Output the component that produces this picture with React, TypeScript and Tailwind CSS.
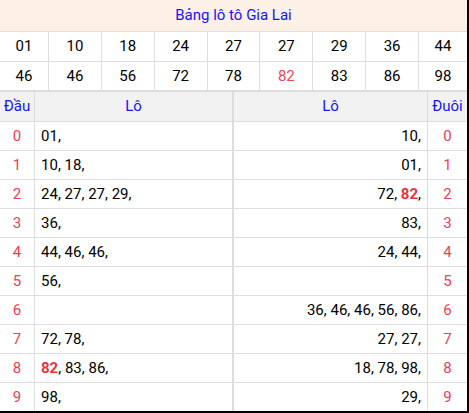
import React from "react";

const top1 = ["01", "10", "18", "24", "27", "27", "29", "36", "44"];
const top2 = ["46", "46", "56", "72", "78", "82", "83", "86", "98"];

type Item = { v: string; hot?: boolean };
const dau: Item[][] = [
  [{ v: "01" }],
  [{ v: "10" }, { v: "18" }],
  [{ v: "24" }, { v: "27" }, { v: "27" }, { v: "29" }],
  [{ v: "36" }],
  [{ v: "44" }, { v: "46" }, { v: "46" }],
  [{ v: "56" }],
  [],
  [{ v: "72" }, { v: "78" }],
  [{ v: "82", hot: true }, { v: "83" }, { v: "86" }],
  [{ v: "98" }],
];
const duoi: Item[][] = [
  [{ v: "10" }],
  [{ v: "01" }],
  [{ v: "72" }, { v: "82", hot: true }],
  [{ v: "83" }],
  [{ v: "24" }, { v: "44" }],
  [],
  [{ v: "36" }, { v: "46" }, { v: "46" }, { v: "56" }, { v: "86" }],
  [{ v: "27" }, { v: "27" }],
  [{ v: "18" }, { v: "78" }, { v: "98" }],
  [{ v: "29" }],
];

function List({ items }: { items: Item[] }) {
  return (
    <>
      {items.map((it, i) => (
        <React.Fragment key={i}>
          {i > 0 ? " " : ""}
          {it.hot ? <b className="font-bold text-[#e8323f]">{it.v}</b> : it.v}
          ,
        </React.Fragment>
      ))}
    </>
  );
}

function NumRow({ nums, last }: { nums: string[]; last?: boolean }) {
  return (
    <div
      className={`grid grid-cols-[49px_repeat(7,1fr)_48px] h-[30px] border-[#dddddd] ${
        last ? "border-b-2" : "border-b"
      }`}
    >
      {nums.map((n, i) => (
        <div
          key={i}
          className={`flex items-center justify-center border-[#dddddd] ${
            i < nums.length - 1 ? "border-r" : ""
          } ${n === "82" ? "text-[#ee4454]" : "text-black"}`}
        >
          {n}
        </div>
      ))}
    </div>
  );
}

export default function App() {
  return (
    <div className="w-[469px] h-[413px] bg-black">
      <div
        className="w-[467px] h-[411px] bg-white overflow-hidden text-[15px] leading-none"
        style={{ fontFamily: "Roboto, 'Noto Sans', sans-serif" }}
      >
        <div className="h-[32px] bg-[#fdf0e6] border-b border-[#dddddd] flex items-center justify-center text-[#1414ff]">
          Bảng lô tô Gia Lai
        </div>
        <NumRow nums={top1} />
        <NumRow nums={top2} last />
        <div className="grid grid-cols-[35px_199px_194px_39px] h-[30px] border-b border-[#dddddd] bg-[#f2f2f2] text-[#1414ff]">
          <div className="flex items-center justify-center border-r border-[#dddddd]">Đầu</div>
          <div className="flex items-center justify-center border-r-2 border-[#dddddd]">Lô</div>
          <div className="flex items-center justify-center border-r border-[#dddddd]">Lô</div>
          <div className="flex items-center justify-center">Đuôi</div>
        </div>
        {dau.map((items, i) => (
          <div
            key={i}
            className={`grid grid-cols-[35px_199px_194px_39px] h-[29px] border-[#dddddd] ${
              i < 9 ? "border-b" : ""
            }`}
          >
            <div className="flex items-center justify-center border-r border-[#dddddd] text-[#ee3e55]">
              {i}
            </div>
            <div className="flex items-center pl-[6px] border-r-2 border-[#dddddd] text-black">
              <span>
                <List items={items} />
              </span>
            </div>
            <div className="flex items-center justify-end pr-[6px] border-r border-[#dddddd] text-black">
              <span>
                <List items={duoi[i]} />
              </span>
            </div>
            <div className="flex items-center justify-center text-[#ee3e55]">{i}</div>
          </div>
        ))}
      </div>
    </div>
  );
}
